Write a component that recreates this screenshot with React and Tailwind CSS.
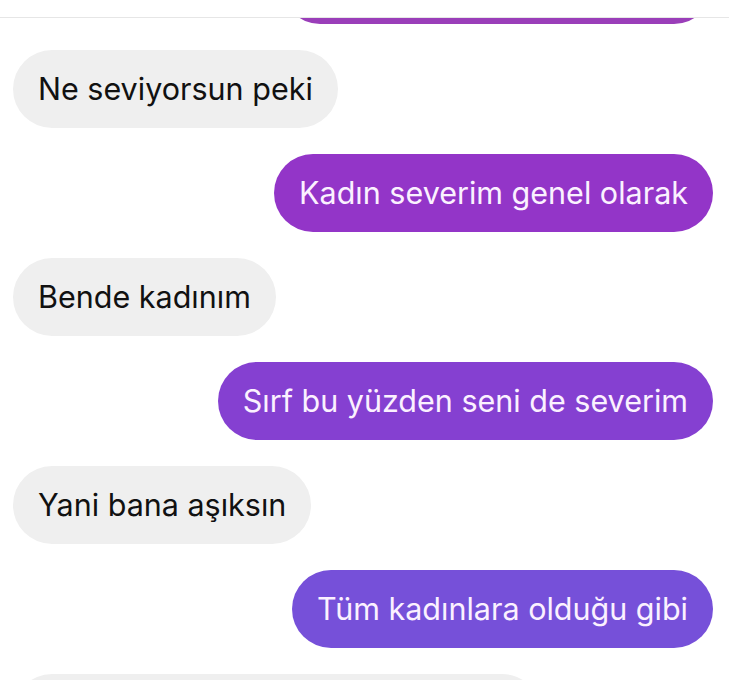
const messages = [
  { me: true, text: "", bg: "bg-[#9a3eb9]", w: "w-[432px]" },
  { me: false, text: "Ne seviyorsun peki" },
  { me: true, text: "Kadın severim genel olarak", bg: "bg-[#9335c8]" },
  { me: false, text: "Bende kadınım" },
  { me: true, text: "Sırf bu yüzden seni de severim", bg: "bg-[#8540d1]" },
  { me: false, text: "Yani bana aşıksın" },
  { me: true, text: "Tüm kadınlara olduğu gibi", bg: "bg-[#7650d9]" },
  { me: false, text: "", w: "w-[528px]" },
];

function Bubble({ msg }) {
  const base =
    "h-[78px] rounded-full flex items-center px-[25px] text-[30.5px] leading-none whitespace-nowrap";
  if (msg.me) {
    return (
      <div className="flex justify-end pr-[16px]">
        <div className={`${base} ${msg.bg} ${msg.w || ""} text-[#fbf1ff]`}>{msg.text}</div>
      </div>
    );
  }
  return (
    <div className="flex justify-start pl-[13px]">
      <div className={`${base} ${msg.w || ""} bg-[#efefef] text-[#111111]`}>{msg.text}</div>
    </div>
  );
}

export default function App() {
  return (
    <div
      className="w-[729px] h-[680px] overflow-hidden bg-white"
      style={{ fontFamily: "Inter, 'Noto Sans', sans-serif" }}
    >
      <div className="h-[18px] border-b border-[#e6e6e6] bg-white relative z-10" />
      <div className="flex flex-col gap-[26px] -mt-[72px]">
        {messages.map((m, i) => (
          <Bubble key={i} msg={m} />
        ))}
      </div>
    </div>
  );
}
